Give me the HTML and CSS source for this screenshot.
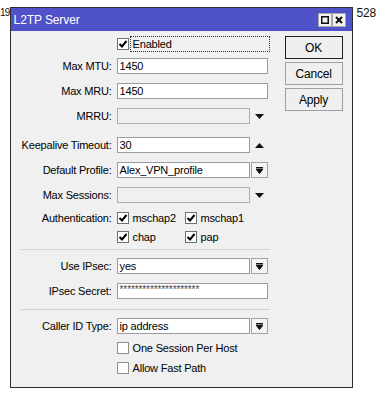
FILE: index.html
```html
<!doctype html>
<html lang="en">
  <head>
    <meta charset="utf-8">
    <title>L2TP Server</title>
    <link rel="stylesheet" href="styles.css">
  </head>
  <body>
    <div class="desk">
      <div class="cell cell-left">19</div>

      <div class="window">
        <div class="titlebar">
          <span class="title">L2TP Server</span>
          <div class="title-buttons">
            <span class="tbtn">
              <svg width="8" height="8" viewBox="0 0 8 8"><rect x="0.75" y="0.75" width="6.5" height="6.5" fill="none" stroke="#111" stroke-width="1.5"/></svg>
            </span>
            <span class="tbtn">
              <svg width="8" height="8" viewBox="0 0 8 8"><path d="M1 1 L7 7 M7 1 L1 7" stroke="#111" stroke-width="2"/></svg>
            </span>
          </div>
        </div>

        <div class="content">
          <div class="form">
            <div class="row row-first">
              <span></span>
              <div class="check">
                <span class="box"><svg width="10" height="10" viewBox="0 0 10 10"><path d="M1.5 5 L4 7.5 L8.5 2" fill="none" stroke="#000" stroke-width="2"/></svg></span>
                <span class="focus">Enabled</span>
              </div>
            </div>

            <div class="row mt6">
              <span class="label">Max MTU:</span>
              <div class="field"><span class="input">1450</span></div>
            </div>
            <div class="row">
              <span class="label">Max MRU:</span>
              <div class="field"><span class="input">1450</span></div>
            </div>
            <div class="row">
              <span class="label">MRRU:</span>
              <div class="field">
                <span class="input disabled"></span>
                <span class="arrow"><svg width="9" height="5" viewBox="0 0 9 5"><path d="M0 0 H9 L4.5 5 Z" fill="#111"/></svg></span>
              </div>
            </div>

            <div class="row mt13">
              <span class="label">Keepalive Timeout:</span>
              <div class="field">
                <span class="input">30</span>
                <span class="arrow"><svg width="9" height="5" viewBox="0 0 9 5"><path d="M0 5 H9 L4.5 0 Z" fill="#111"/></svg></span>
              </div>
            </div>
            <div class="row">
              <span class="label">Default Profile:</span>
              <div class="field">
                <span class="input">Alex_VPN_profile</span>
                <span class="dd"><svg width="7" height="7" viewBox="0 0 7 7"><path d="M0 0.5 H7 M0 2 H7 L3.5 6.5 Z" stroke="#111" stroke-width="1" fill="#111"/></svg></span>
              </div>
            </div>
            <div class="row">
              <span class="label">Max Sessions:</span>
              <div class="field">
                <span class="input disabled"></span>
                <span class="arrow"><svg width="9" height="5" viewBox="0 0 9 5"><path d="M0 0 H9 L4.5 5 Z" fill="#111"/></svg></span>
              </div>
            </div>

            <div class="row row-auth">
              <span class="label">Authentication:</span>
              <div class="auth">
                <div class="check"><span class="box"><svg width="10" height="10" viewBox="0 0 10 10"><path d="M1.5 5 L4 7.5 L8.5 2" fill="none" stroke="#000" stroke-width="2"/></svg></span>mschap2</div>
                <div class="check"><span class="box"><svg width="10" height="10" viewBox="0 0 10 10"><path d="M1.5 5 L4 7.5 L8.5 2" fill="none" stroke="#000" stroke-width="2"/></svg></span>mschap1</div>
                <div class="check"><span class="box"><svg width="10" height="10" viewBox="0 0 10 10"><path d="M1.5 5 L4 7.5 L8.5 2" fill="none" stroke="#000" stroke-width="2"/></svg></span>chap</div>
                <div class="check"><span class="box"><svg width="10" height="10" viewBox="0 0 10 10"><path d="M1.5 5 L4 7.5 L8.5 2" fill="none" stroke="#000" stroke-width="2"/></svg></span>pap</div>
              </div>
            </div>

            <div class="sep sep-a"></div>

            <div class="row mt8">
              <span class="label">Use IPsec:</span>
              <div class="field">
                <span class="input">yes</span>
                <span class="dd"><svg width="7" height="7" viewBox="0 0 7 7"><path d="M0 0.5 H7 M0 2 H7 L3.5 6.5 Z" stroke="#111" stroke-width="1" fill="#111"/></svg></span>
              </div>
            </div>
            <div class="row">
              <span class="label">IPsec Secret:</span>
              <div class="field"><span class="input secret">*********************</span></div>
            </div>

            <div class="sep sep-b"></div>

            <div class="row mt8">
              <span class="label">Caller ID Type:</span>
              <div class="field">
                <span class="input">ip address</span>
                <span class="dd"><svg width="7" height="7" viewBox="0 0 7 7"><path d="M0 0.5 H7 M0 2 H7 L3.5 6.5 Z" stroke="#111" stroke-width="1" fill="#111"/></svg></span>
              </div>
            </div>
            <div class="row mt6">
              <span></span>
              <div class="check"><span class="box off"></span>One Session Per Host</div>
            </div>
            <div class="row mt4">
              <span></span>
              <div class="check"><span class="box off"></span>Allow Fast Path</div>
            </div>
          </div>

          <div class="actions">
            <button class="btn btn-default">OK</button>
            <button class="btn">Cancel</button>
            <button class="btn">Apply</button>
          </div>
        </div>
      </div>

      <div class="cell cell-right">528</div>
    </div>
  </body>
</html>
```

FILE: styles.css
```css
body {
    margin: 0;
    background: #fff;
    color: #000;
    font-family: "Liberation Sans", Arial, sans-serif;
    font-size: 11px;
    letter-spacing: -0.2px;
}

.desk {
    display: flex;
    align-items: flex-start;
}

.cell {
    font-size: 12px;
    line-height: 12px;
    padding-top: 7px;
    color: #111;
}

.cell-left {
    width: 10px;
    font-size: 10px;
    letter-spacing: -0.8px;
    white-space: nowrap;
}

.cell-right {
    margin-left: 4px;
}

/* window frame */
.window {
    box-sizing: border-box;
    width: 344px;
    height: 381px;
    margin-top: 7px;
    border: 1px solid #2e2e2e;
    background: #f0f0f0;
}

.titlebar {
    height: 23px;
    background: #4f52c8;
    display: flex;
    align-items: center;
    justify-content: space-between;
    padding: 0 6px 0 3px;
}

.title {
    color: #fff;
    font-size: 12px;
    letter-spacing: -0.1px;
}

.title-buttons {
    display: flex;
}

.tbtn {
    width: 12px;
    height: 12px;
    border: 1px solid #a8a8a8;
    background: #f2f2f2;
    display: flex;
    align-items: center;
    justify-content: center;
}

.content {
    display: flex;
    padding-right: 9px;
}

.form {
    width: 257px;
}

/* form rows */
.row {
    display: grid;
    grid-template-columns: 101px 151px;
    column-gap: 5px;
    align-items: center;
    height: 16px;
    margin-top: 9px;
}

.row-first { margin-top: 5px; }
.mt4 { margin-top: 4px; }
.mt6 { margin-top: 6px; }
.mt8 { margin-top: 8px; }
.mt13 { margin-top: 13px; }

.label {
    text-align: right;
    line-height: 16px;
}

.field {
    display: flex;
    gap: 1px;
    height: 16px;
}

.input {
    box-sizing: border-box;
    flex: 1;
    height: 16px;
    border: 1px solid #9c9c9c;
    background: #fff;
    padding-left: 2px;
    line-height: 14px;
    white-space: nowrap;
    overflow: hidden;
}

.input.disabled {
    background: #f0f0f0;
    border-color: #adadad;
}

.input.secret {
    color: #444;
    font-size: 10px;
    letter-spacing: -0.1px;
    line-height: 12px;
}

.arrow {
    width: 17px;
    display: flex;
    align-items: center;
    justify-content: center;
}

.dd {
    box-sizing: border-box;
    width: 17px;
    height: 16px;
    border: 1px solid #a3a3a3;
    background: #f4f4f4;
    display: flex;
    align-items: center;
    justify-content: center;
}

/* checkboxes */
.check {
    display: flex;
    align-items: center;
    gap: 4px;
    height: 16px;
}

.box {
    box-sizing: border-box;
    width: 12px;
    height: 12px;
    border: 1px solid #707070;
    background: #fff;
    display: flex;
    align-items: center;
    justify-content: center;
    flex: none;
}

.box.off {
    border-color: #8f8f8f;
}

.row-first .check {
    gap: 1px;
}

.focus {
    flex: 1;
    height: 16px;
    box-sizing: border-box;
    margin-right: -2px;
    padding-left: 2px;
    border: 1px dotted #333;
    line-height: 14px;
}

.row-auth {
    height: auto;
    align-items: start;
    margin-top: 7px;
}

.auth {
    display: grid;
    grid-template-columns: 68px auto;
    row-gap: 3px;
}

.sep {
    margin-left: 9px;
    margin-right: -2px;
    border-top: 1px solid #d3d3d3;
}

.sep-a { margin-top: 4px; }
.sep-b { margin-top: 10px; }

/* buttons */
.actions {
    margin-left: 17px;
    width: 58px;
    padding-top: 5px;
    display: flex;
    flex-direction: column;
    gap: 3px;
}

.btn {
    box-sizing: border-box;
    height: 23px;
    border: 1px solid #a0a0a0;
    background: #efefef;
    font-family: "Liberation Sans", Arial, sans-serif;
    font-size: 12px;
    letter-spacing: -0.2px;
    color: #000;
    padding: 0;
}

.btn-default {
    border-color: #1e1e1e;
}
```
